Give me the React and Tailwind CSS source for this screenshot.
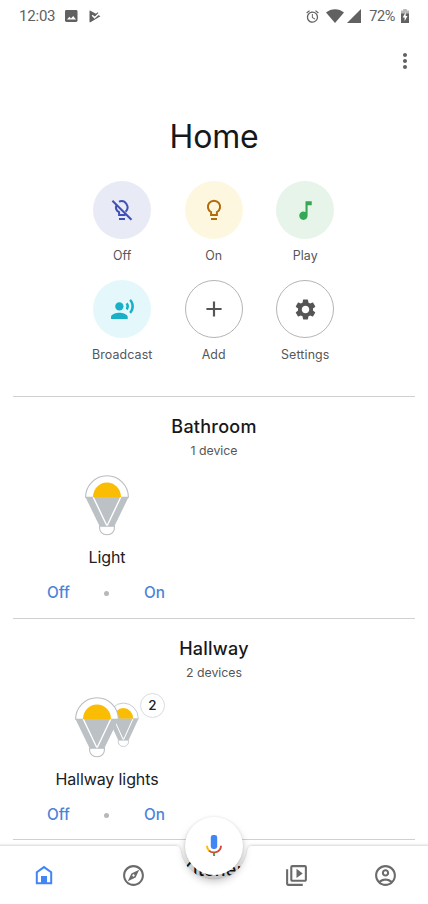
import React from "react";
import {
  MdAlarm,
  MdMusicNote,
  MdRecordVoiceOver,
  MdSettings,
  MdAdd,
  MdMoreVert,
  MdOutlineExplore,
  MdOutlineVideoLibrary,
  MdOutlineAccountCircle,
} from "react-icons/md";

function StatusBar() {
  return (
    <div className="flex h-8 items-center justify-between pl-[19px] pr-[19px] text-[#616161]">
      <div className="flex items-center">
        <span className="font-['Roboto'] text-[15px] tracking-[-0.2px]">12:03</span>
        <svg className="ml-[10px]" width="13" height="12" viewBox="0 0 13 12">
          <rect width="12.5" height="12" rx="1.4" fill="#616161" />
          <path d="M2 9.6 4.4 6.8 6 8.5 8.2 6 11 9.6Z" fill="#fff" />
        </svg>
        <svg className="ml-[11px]" width="12" height="13" viewBox="0 0 12 13">
          <path d="M.5 1.2Q.5.3 1.4.8L11.5 6.2 1.4 12.2Q.5 12.6.5 11.8Z" fill="#616161" />
          <path d="M3.2 5.2 5.6 7.6 10.8 2.6" fill="none" stroke="#fff" strokeWidth="1.5" />
          <path d="M4.4 4 6 5.4 9 2.6" fill="none" stroke="#616161" strokeWidth="1.2" />
        </svg>
      </div>
      <div className="flex items-center">
        <MdAlarm size={15} />
        <svg className="ml-[6px]" width="18" height="14" viewBox="0 0 18 14">
          <path d="M0 3.6C5-.9 13-.9 18 3.6L9 14Z" fill="#616161" />
        </svg>
        <svg className="ml-[3px]" width="14" height="14" viewBox="0 0 14 14">
          <path d="M14 0V14H0Z" fill="#616161" />
        </svg>
        <span className="ml-[8px] mr-px mt-[2px] font-['Roboto'] text-[14.5px] tracking-[-0.4px]">72%</span>
        <svg className="ml-[5px]" width="8" height="14" viewBox="0 0 8 14">
          <path d="M0 1.5H2.2V0H5.8V1.5H8V5H0Z" fill="#b8b8b8" />
          <path d="M0 4.5H8V14H0Z" fill="#616161" />
          <path d="M4.7 3 1.7 8.4H3.6V12.2L6.5 7H4.7Z" fill="#fff" />
        </svg>
      </div>
    </div>
  );
}

function BulbGlyph({ off = false }) {
  return (
    <svg width="24" height="24" viewBox="0 0 24 24" fill="none" stroke="currentColor" strokeWidth="2">
      {off ? (
        <>
          <path d="M9 3.7A6.1 6.1 0 0 1 15.6 13.7" />
          <path d="M6.2 7.4A6.1 6.1 0 0 0 9.1 14.2V17H15.6" />
          <path d="M2.4 2.7 21.5 21.8" />
        </>
      ) : (
        <path d="M9.1 17V14.2A6.1 6.1 0 1 1 14.9 14.2V17Z" />
      )}
      <path d="M9 21H15" />
    </svg>
  );
}

function Action({ label, circle, children }) {
  return (
    <div className="flex w-[91.5px] flex-col items-center">
      <div className={"flex size-[58px] items-center justify-center rounded-full " + circle}>{children}</div>
      <span className="mt-[8px] text-[12.4px] leading-[17px] tracking-[0.12px] text-[#555659]">{label}</span>
    </div>
  );
}

function LampShape() {
  return (
    <>
      <path d="M.6 22.2A21.4 21.4 0 0 1 43.4 22.2Z" fill="#fff" stroke="#b9bdc1" strokeWidth="1.1" />
      <path d="M8 22A14 14.5 0 0 1 36 22Z" fill="#fbbc04" />
      <path d="M.4 22H43.6L29.5 51H14.5Z" fill="#bcc1c5" />
      <path d="M8.3 22.3 22 51 35.7 22.3" fill="none" stroke="#fff" strokeWidth="1.4" />
      <path d="M14.5 51.3H29.5C29.8 57 26.6 59.8 22 59.8S14.2 57 14.5 51.3Z" fill="#fff" stroke="#b9bdc1" strokeWidth="1.1" />
    </>
  );
}

function Lamps({ count }) {
  if (count === 1) {
    return (
      <svg width="44" height="61" viewBox="0 0 44 61">
        <LampShape />
      </svg>
    );
  }
  return (
    <div className="relative">
      <svg width="64" height="61" viewBox="0 0 64 61">
        <g transform="translate(33 5.5) scale(.7 .735)">
          <LampShape />
        </g>
        <LampShape />
      </svg>
      <span className="absolute -top-[4px] left-[65px] flex size-[25px] items-center justify-center rounded-full border border-[#dadce0] bg-white text-[13.5px] font-medium text-[#202124]">
        {count}
      </span>
    </div>
  );
}

function Room({ name, devices, height = "h-[222px]", children }) {
  return (
    <section className={"mx-[13px] flex flex-col border-t border-[#d0d0d0] " + height}>
      <h2 className="mt-[18px] text-center text-[18px] font-medium leading-6 tracking-[0.25px] text-[#17181a]">{name}</h2>
      <p className="mt-[3px] text-center text-[12.3px] leading-[17px] text-[#555659]">{devices}</p>
      {children}
    </section>
  );
}

function Device({ name, count }) {
  return (
    <div className="flex w-[188px] flex-col items-center">
      <div className="mt-[16px] h-[61px]">
        <Lamps count={count} />
      </div>
      <p className="mt-[9px] text-[16px] leading-6 tracking-[-0.1px] text-[#202124]">{name}</p>
      <div className="mt-[14px] flex w-full items-center justify-between pl-[34px] pr-[36px] text-[15.3px] font-medium leading-5 text-[#4a83da]">
        <span>Off</span>
        <span className="mr-[1px] size-[5px] rounded-full bg-[#b8b8b8]" />
        <span>On</span>
      </div>
    </div>
  );
}

function HomeGlyph() {
  return (
    <svg width="18" height="20" viewBox="0 0 18 20">
      <path d="M1.8 18.2V7.2L9 2.1 16.2 7.2V18.2Z" fill="none" stroke="#4285f4" strokeWidth="2" />
      <path d="M6 11H12V18.5H6Z" fill="#4285f4" />
    </svg>
  );
}

function MicGlyph() {
  return (
    <svg width="16" height="22" viewBox="0 0 16 22" fill="none" strokeWidth="1.9">
      <rect x="4.8" y="0" width="6.4" height="14" rx="2.4" fill="#4285f4" />
      <path d="M1 10.8Q1 14 3.2 15.8" stroke="#fbbc04" />
      <path d="M3 15.6C6 18.5 14.8 18.3 15 10.8" stroke="#db4437" />
      <path d="M8 17.7V21" stroke="#34a853" />
    </svg>
  );
}

function BottomNav() {
  return (
    <nav className="absolute bottom-0 left-0 h-[58px] w-full">
      <svg className="absolute -top-[10px] left-0" width="428" height="68" viewBox="0 0 428 68">
        <defs>
          <filter id="edge" x="-5%" y="-20%" width="110%" height="140%">
            <feDropShadow dx="0" dy="-0.5" stdDeviation="1.7" floodColor="#000" floodOpacity="0.22" />
          </filter>
        </defs>
        <path
          d="M-10 10H175.5Q179.5 10 180.3 14A34 34 0 0 0 247.7 14Q248.5 10 252.5 10H438V80H-10Z"
          fill="#fff"
          filter="url(#edge)"
        />
      </svg>
      <div className="relative flex h-full text-[#6b6b6b]">
        <span className="flex w-[88px] items-center justify-center"><HomeGlyph /></span>
        <span className="flex w-[90px] items-center justify-center"><MdOutlineExplore size={25} /></span>
        <span className="flex w-[72px] justify-center">
          <span className="-mt-[29px] flex size-[58px] shrink-0 items-center justify-center rounded-full bg-white shadow-[0_6px_8px_rgba(0,0,0,0.25),0_0_3px_rgba(0,0,0,0.1)]">
            <MicGlyph />
          </span>
        </span>
        <span className="flex w-[93px] items-center justify-center"><MdOutlineVideoLibrary size={25} /></span>
        <span className="flex w-[85px] items-center justify-center"><MdOutlineAccountCircle size={25} /></span>
      </div>
    </nav>
  );
}

export default function App() {
  return (
    <div className="relative h-[904px] w-[428px] overflow-hidden bg-white font-['Inter','Noto_Sans',sans-serif]">
      <StatusBar />
      <div className="flex h-[58px] justify-end pr-[11px] pt-[17px] text-[#616161]">
        <MdMoreVert size={24} />
      </div>
      <h1 className="mt-[25px] text-center text-[32px] leading-[44px] tracking-[-0.2px] text-[#17181a]">Home</h1>
      <div className="ml-[76.5px] mt-[22px] flex w-[275px] flex-wrap gap-y-[16px]">
        <Action label="Off" circle="bg-[#e8eaf6] text-[#3f51b5]"><BulbGlyph off /></Action>
        <Action label="On" circle="bg-[#fef7e0] text-[#b06c0a]"><BulbGlyph /></Action>
        <Action label="Play" circle="bg-[#e6f4ea] text-[#34a853]"><MdMusicNote size={25} /></Action>
        <Action label="Broadcast" circle="bg-[#e4f7fb] text-[#19b0c7]"><MdRecordVoiceOver size={25} /></Action>
        <Action label="Add" circle="border border-[#b5b5b5] text-[#555]"><MdAdd size={26} /></Action>
        <Action label="Settings" circle="border border-[#b5b5b5] text-[#555]"><MdSettings size={25} /></Action>
      </div>
      <div className="mt-[33px]">
        <Room name="Bathroom" devices="1 device"><Device name="Light" count={1} /></Room>
        <Room name="Hallway" devices="2 devices" height="h-[221px]"><Device name="Hallway lights" count={2} /></Room>
        <Room name="Kitchen" devices="" />
      </div>
      <BottomNav />
    </div>
  );
}
